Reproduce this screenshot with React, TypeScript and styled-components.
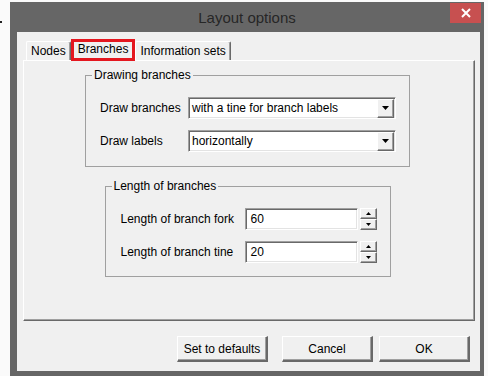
import React from 'react';
import styled, { createGlobalStyle } from 'styled-components';

const GlobalStyle = createGlobalStyle`
  html, body {
    margin: 0;
    padding: 0;
    background: #fafafa;
  }
  body {
    font-family: 'Liberation Sans', Arial, sans-serif;
    font-size: 12px;
    color: #000;
  }
  * {
    box-sizing: border-box;
  }
`;

const Desktop = styled.div`
  position: relative;
  width: 488px;
  height: 376px;
  overflow: hidden;
  padding: 2px 0 0 10px;
`;

const Mark = styled.span`
  position: absolute;
  left: 0;
  top: 21px;
  width: 2px;
  height: 2px;
  background: #222;
`;

const Window = styled.div`
  width: 474px;
  height: 374px;
  background: #666666;
  display: flex;
  flex-direction: column;
`;

const TitleBar = styled.div`
  position: relative;
  height: 30px;
  flex-shrink: 0;
  display: flex;
  align-items: center;
  justify-content: center;
  font-size: 15px;
  color: #262626;
`;

const CloseButton = styled.div`
  position: absolute;
  top: 1px;
  right: 3px;
  width: 31px;
  height: 20px;
  background: #c75050;
  display: flex;
  align-items: center;
  justify-content: center;
`;

const Client = styled.div`
  margin: 0 4px 0 7px;
  height: 339px;
  background: #f0f0f0;
  padding: 7px 5px 0 6px;
  display: flex;
  flex-direction: column;
`;

const TabStrip = styled.div`
  display: flex;
  align-items: flex-end;
  height: 21px;
  padding-left: 3px;
  position: relative;
  z-index: 1;
`;

const Tab = styled.div<{ $active?: boolean }>`
  display: flex;
  align-items: center;
  background: #f0f0f0;
  white-space: nowrap;
  ${(p) =>
    p.$active
      ? `
    height: 22px;
    margin-bottom: -1px;
    padding: 0 4px 3px;
    border: 3px solid #e4171f;
  `
      : `
    height: 19px;
    padding: 0 4px;
    border-top: 1px solid #fff;
    border-left: 1px solid #fff;
    border-right: 1px solid #696969;
    border-radius: 2px 2px 0 0;
    box-shadow: inset -1px 0 0 #a0a0a0;
  `}
`;

const Panel = styled.div`
  height: 261px;
  border-top: 1px solid #fff;
  border-left: 1px solid #fff;
  border-right: 1px solid #696969;
  border-bottom: 1px solid #696969;
  box-shadow: inset -1px -1px 0 #a0a0a0;
  padding: 7px 3px 0 0;
  display: flex;
  flex-direction: column;
  align-items: center;
`;

const Group = styled.fieldset<{ $width: number; $top?: number }>`
  width: ${(p) => p.$width}px;
  min-inline-size: 0;
  margin: ${(p) => p.$top ?? 0}px 0 0;
  padding: 0;
  border: 1px solid #a0a0a0;
`;

const Legend = styled.legend`
  margin-left: 6px;
  padding: 0 2px;
  line-height: 14px;
  font-size: 12px;
`;

const Rows = styled.div<{ $label: number; $pad: string }>`
  display: grid;
  grid-template-columns: ${(p) => p.$label}px auto;
  align-items: center;
  row-gap: 11px;
  padding: ${(p) => p.$pad};
`;

const Label = styled.span`
  white-space: nowrap;
`;

const sunken = `
  background: #fff;
  border: 1px solid;
  border-color: #a0a0a0 #fff #fff #a0a0a0;
  box-shadow: inset 1px 1px 0 #696969, inset -1px -1px 0 #e3e3e3;
`;

const raised = `
  background: #f0f0f0;
  border: 1px solid;
  border-color: #fff #696969 #696969 #fff;
  box-shadow: inset -1px -1px 0 #a0a0a0;
`;

const Combo = styled.div`
  ${sunken}
  width: 208px;
  height: 22px;
  display: flex;
  align-items: center;
  padding: 1px 1px 1px 3px;
`;

const ComboText = styled.span`
  flex: 1;
  white-space: nowrap;
`;

const ArrowButton = styled.div`
  ${raised}
  width: 17px;
  height: 19px;
  display: flex;
  align-items: center;
  justify-content: center;
`;

const SpinField = styled.div`
  display: flex;
  align-items: center;
  gap: 2px;
`;

const NumberBox = styled.div`
  ${sunken}
  width: 113px;
  height: 22px;
  display: flex;
  align-items: center;
  padding-left: 5px;
`;

const Spinner = styled.div`
  display: flex;
  flex-direction: column;
  width: 17px;
  height: 22px;
`;

const SpinButton = styled.div`
  ${raised}
  flex: 1;
  display: flex;
  align-items: center;
  justify-content: center;
`;

const ButtonRow = styled.div`
  display: flex;
  justify-content: flex-end;
  gap: 6px;
  margin-top: 15px;
  padding-right: 5px;
`;

const Button = styled.div<{ $spaced?: boolean }>`
  ${raised}
  width: 91px;
  height: 26px;
  display: flex;
  align-items: center;
  justify-content: center;
  margin-right: ${(p) => (p.$spaced ? 8 : 0)}px;
  border-width: 1px 2px 2px 1px;
`;

const Triangle = ({ up, w, h }: { up?: boolean; w: number; h: number }) => (
  <svg width={w} height={h} viewBox={`0 0 ${w} ${h}`}>
    <polygon
      points={up ? `0,${h} ${w},${h} ${w / 2},0` : `0,0 ${w},0 ${w / 2},${h}`}
      fill="#000"
    />
  </svg>
);

function ComboBox({ value }: { value: string }) {
  return (
    <Combo>
      <ComboText>{value}</ComboText>
      <ArrowButton>
        <Triangle w={7} h={4} />
      </ArrowButton>
    </Combo>
  );
}

function NumberField({ value }: { value: string }) {
  return (
    <SpinField>
      <NumberBox>{value}</NumberBox>
      <Spinner>
        <SpinButton>
          <Triangle up w={5} h={3} />
        </SpinButton>
        <SpinButton>
          <Triangle w={5} h={3} />
        </SpinButton>
      </Spinner>
    </SpinField>
  );
}

export default function App() {
  return (
    <>
      <GlobalStyle />
      <Desktop>
        <Mark />
        <Window>
          <TitleBar>
            Layout options
            <CloseButton>
              <svg width="10" height="10" viewBox="0 0 10 10">
                <path d="M1 1L9 9M9 1L1 9" stroke="#fff" strokeWidth="2" />
              </svg>
            </CloseButton>
          </TitleBar>
          <Client>
            <TabStrip>
              <Tab>Nodes</Tab>
              <Tab $active>Branches</Tab>
              <Tab>Information sets</Tab>
            </TabStrip>
            <Panel>
              <Group $width={325}>
                <Legend>Drawing branches</Legend>
                <Rows $label={88} $pad="15px 13px 14px 14px">
                  <Label>Draw branches</Label>
                  <ComboBox value="with a tine for branch labels" />
                  <Label>Draw labels</Label>
                  <ComboBox value="horizontally" />
                </Rows>
              </Group>
              <Group $width={286} $top={12}>
                <Legend>Length of branches</Legend>
                <Rows $label={124} $pad="15px 13px 13px 15px">
                  <Label>Length of branch fork</Label>
                  <NumberField value="60" />
                  <Label>Length of branch tine</Label>
                  <NumberField value="20" />
                </Rows>
              </Group>
            </Panel>
            <ButtonRow>
              <Button $spaced>Set to defaults</Button>
              <Button>Cancel</Button>
              <Button>OK</Button>
            </ButtonRow>
          </Client>
        </Window>
      </Desktop>
    </>
  );
}
